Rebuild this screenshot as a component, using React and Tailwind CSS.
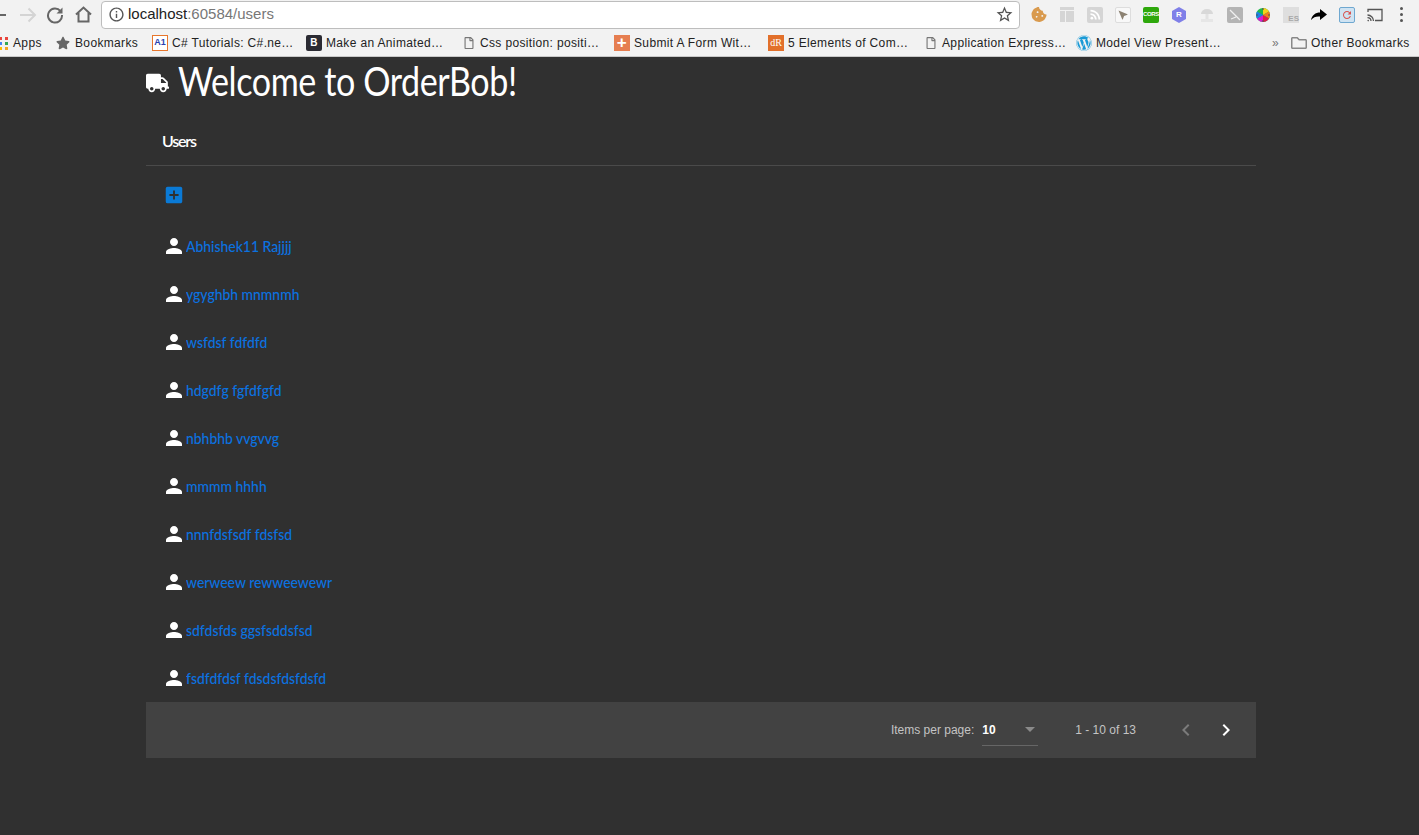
import React from 'react';
import { FaTruck, FaStar, FaWordpress, FaRegFile, FaRegFolder, FaCookieBite } from 'react-icons/fa';
import {
  MdPerson, MdAddBox, MdChevronLeft, MdChevronRight, MdRefresh, MdInfoOutline, MdStarBorder, MdRssFeed, MdNearMe,
} from 'react-icons/md';

const users = [
  'Abhishek11 Rajjjj',
  'ygyghbh mnmnmh',
  'wsfdsf fdfdfd',
  'hdgdfg fgfdfgfd',
  'nbhbhb vvgvvg',
  'mmmm hhhh',
  'nnnfdsfsdf fdsfsd',
  'werweew rewweewewr',
  'sdfdsfds ggsfsddsfsd',
  'fsdfdfdsf fdsdsfdsfdsfd',
];

const DocIcon = () => <FaRegFile className="text-[12px] text-[#777]" />;

const bookmarks = [
  { w: 'w-[154px]', gap: 'gap-[4px]', iconW: 'w-[16px]', label: 'C# Tutorials: C#.ne…', icon: <span className="flex h-4 w-4 items-center justify-center border border-[#e8762c] bg-white font-['Liberation_Sans',sans-serif] text-[9px] font-bold tracking-normal text-[#2b3fb0]">A1</span> },
  { w: 'w-[157px]', gap: 'gap-[4px]', iconW: 'w-[16px]', label: 'Make an Animated…', icon: <span className="flex h-4 w-4 items-center justify-center rounded-[2px] bg-[#2b2b33] text-[10px] font-bold text-white">B</span> },
  { w: 'w-[151px]', gap: 'gap-[5px]', iconW: 'w-[12px]', label: 'Css position: positi…', icon: <DocIcon /> },
  { w: 'w-[154px]', gap: 'gap-[4px]', iconW: 'w-[16px]', label: 'Submit A Form Wit…', icon: <span className="flex h-4 w-4 items-center justify-center bg-[#e67e50] text-[17px] font-bold leading-none text-white">+</span> },
  { w: 'w-[157px]', gap: 'gap-[4px]', iconW: 'w-[16px]', label: '5 Elements of Com…', icon: <span className="flex h-4 w-4 items-center justify-center bg-[#e2702b] font-['Liberation_Serif',serif] text-[10px] tracking-normal text-white">dR</span> },
  { w: 'w-[151px]', gap: 'gap-[5px]', iconW: 'w-[12px]', label: 'Application Express…', icon: <DocIcon /> },
  { w: 'w-[196px]', gap: 'gap-[4px]', iconW: 'w-[16px]', label: 'Model View Present…', icon: <FaWordpress className="text-[16px] text-[#1a9ad6]" /> },
];

const AppsGrid = () => (
  <svg width="8" height="16" viewBox="0 0 8 16">
    <rect x="0" y="2" width="2" height="3" fill="#e8453c" />
    <rect x="5" y="2" width="3" height="3" fill="#e8453c" />
    <rect x="0" y="7" width="2" height="3" fill="#4285f4" />
    <rect x="5" y="7" width="3" height="3" fill="#34a853" />
    <rect x="0" y="12" width="2" height="3" fill="#fbbc05" />
    <rect x="5" y="12" width="3" height="3" fill="#f5a623" />
  </svg>
);

const ForwardArrow = () => (
  <svg width="20" height="20" viewBox="0 0 20 20" fill="none" stroke="#d4d4d4" strokeWidth="2">
    <path d="M2 10h15M10.500 3.500 17 10l-6.500 6.500" />
  </svg>
);

const ReloadIcon = () => (
  <svg width="18" height="18" viewBox="0 0 18 18" fill="none">
    <path d="M14.500 5.200A7 7 0 1 0 16 9" stroke="#666" strokeWidth="2" />
    <path d="M16.500 1.500v6h-6z" fill="#666" />
  </svg>
);

const HomeIcon = () => (
  <svg width="17" height="17" viewBox="0 0 17 17" fill="none" stroke="#666" strokeWidth="2">
    <path d="M1 8.500 8.500 1.500 16 8.500M3.500 7v8.500h10V7" />
  </svg>
);

const ShareArrow = () => (
  <svg width="16" height="16" viewBox="0 0 16 16">
    <path d="M0 13C1 8 4.500 5.500 9 5.500V2l7 5.500-7 5.500V9.500C5.500 9 2.500 10 0 13z" fill="#000" />
  </svg>
);

const CastIcon = () => (
  <svg width="16" height="14" viewBox="0 0 16 14" fill="none" stroke="#555" strokeWidth="1.300">
    <path d="M1 4V1.500h14v11H8" />
    <path d="M.5 7a6 6 0 0 1 6 6M.5 9.600A3.500 3.500 0 0 1 4 13" />
    <circle cx="1.200" cy="12.600" r=".8" fill="#555" stroke="none" />
  </svg>
);

const ColorWheel = () => (
  <svg width="16" height="16" viewBox="0 0 16 16">
    <circle cx="8" cy="8" r="7" fill="#1fb84a" />
    <path d="M8 8V1a7 7 0 0 1 6 3.500z" fill="#f7d21c" />
    <path d="M8 8l6-3.500a7 7 0 0 1 0 7z" fill="#f47b20" />
    <path d="M8 8l6 3.500A7 7 0 0 1 8 15z" fill="#e6194b" />
    <path d="M8 8v7a7 7 0 0 1-6-3.500z" fill="#d61cd1" />
    <path d="M8 8l-6 3.500a7 7 0 0 1 0-7z" fill="#1c7fe6" />
    <path d="M8 1v2M8 13v2M1 8h2M13 8h2" stroke="#555" strokeWidth="1.200" />
  </svg>
);

const HexIcon = () => (
  <div className="relative flex h-4 w-4 items-center justify-center">
    <svg width="16" height="16" viewBox="0 0 16 16"><path d="M8 0l7 4v8l-7 4-7-4V4z" fill="#7f7fe8" /></svg>
    <span className="absolute font-['Liberation_Sans',sans-serif] text-[8px] font-bold text-white">R</span>
  </div>
);

const MushroomIcon = () => (
  <svg width="16" height="16" viewBox="0 0 16 16">
    <path d="M2 7a6 5 0 0 1 12 0z" fill="#d8d8d8" />
    <rect x="6.500" y="7" width="3" height="5" fill="#e2e2e2" />
    <rect x="2" y="12" width="12" height="3" fill="#e6e6e6" />
  </svg>
);

const SlashTile = () => (
  <svg width="16" height="16" viewBox="0 0 16 16">
    <rect width="16" height="16" rx="2" fill="#b4b4b4" />
    <path d="M3 3l10 10M4 12l5-2" stroke="#f0f0f0" strokeWidth="1.300" />
  </svg>
);

const Toolbar = () => (
  <div className="flex h-[29px] items-center bg-[#f2f2f2]">
    <div className="h-[2px] w-[6px] bg-[#666]" />
    <div className="ml-[12px]"><ForwardArrow /></div>
    <div className="ml-[8px]"><ReloadIcon /></div>
    <div className="ml-[11px]"><HomeIcon /></div>
    <div className="ml-[9px] flex h-[28px] w-[919px] items-center rounded-[4px] border border-[#bdbdbd] bg-white pl-[6px] pr-[5px]">
      <MdInfoOutline className="text-[17px] text-[#555]" />
      <span className="ml-[3px] font-['Liberation_Sans',sans-serif] text-[15px] text-[#222]">localhost<span className="text-[#777]">:60584/users</span></span>
      <MdStarBorder className="ml-auto text-[19px] text-[#555]" />
    </div>
    <div className="ml-[11px] flex items-center gap-[12px]">
      <FaCookieBite className="w-4 text-[15px] text-[#d99a4e]" />
      <div className="flex h-[15px] w-4 flex-col gap-[1px] px-[1px]"><div className="h-[3px] bg-[#d5d5d5]" /><div className="flex flex-1 gap-[1px]"><div className="w-[5px] bg-[#d5d5d5]" /><div className="flex-1 bg-[#d5d5d5]" /></div></div>
      <div className="flex h-4 w-4 items-center justify-center rounded-[2px] bg-[#d5d5d5]"><MdRssFeed className="text-[15px] text-white" /></div>
      <div className="flex h-4 w-4 items-center justify-center rounded-[2px] border border-[#ddd] bg-[#f8f8f8]"><MdNearMe className="-scale-x-100 text-[12px] text-[#8c8272]" /></div>
      <div className="flex h-4 w-4 items-center justify-center rounded-[2px] bg-[#2ea80c] font-['Liberation_Sans',sans-serif] text-[6px] font-bold tracking-[-0.3px] text-white">CORS</div>
      <HexIcon />
      <MushroomIcon />
      <SlashTile />
      <ColorWheel />
      <div className="flex h-4 w-4 items-end justify-end bg-[#dedede] font-['Liberation_Sans',sans-serif] text-[8px] font-bold leading-[9px] text-[#a8a8a8]">ES</div>
      <ShareArrow />
      <div className="flex h-4 w-4 items-center justify-center rounded-[2px] border border-[#6fa8d0] bg-[#cfe3f2]"><MdRefresh className="text-[12px] text-[#d9534f]" /></div>
      <CastIcon />
    </div>
    <div className="ml-[17px] flex flex-col gap-[3px]">
      <span className="h-[3px] w-[3px] rounded-full bg-[#555]" />
      <span className="h-[3px] w-[3px] rounded-full bg-[#555]" />
      <span className="h-[3px] w-[3px] rounded-full bg-[#555]" />
    </div>
  </div>
);

const BookmarksBar = () => (
  <div className="flex h-[28px] items-center border-b border-[#c8c8c8] bg-[#f2f2f2] font-['Liberation_Sans',sans-serif] text-[12px] tracking-[0.35px] text-[#222]">
    <div className="flex w-[56px] items-center gap-[5px]"><AppsGrid /><span>Apps</span></div>
    <div className="flex w-[96px] items-center gap-[5px]"><FaStar className="text-[14px] text-[#666]" /><span>Bookmarks</span></div>
    {bookmarks.map((b) => (
      <div key={b.label} className={`flex items-center ${b.gap} ${b.w}`}>
        <span className={`flex justify-center ${b.iconW}`}>{b.icon}</span>
        <span className="whitespace-nowrap">{b.label}</span>
      </div>
    ))}
    <span className="w-[19px] text-[#777]">»</span>
    <FaRegFolder className="text-[16px] text-[#888]" />
    <span className="ml-[4px] whitespace-nowrap">Other Bookmarks</span>
  </div>
);

const Paginator = () => (
  <div className="flex h-[56px] items-center justify-end bg-[#424242] font-['Liberation_Sans',sans-serif] text-[12px]">
    <span className="text-[#c4c4c4]">Items per page:</span>
    <div className="ml-[8px] mt-[1px] flex h-[30px] w-[56px] items-center justify-between border-b border-[#666] pb-[1px]">
      <span className="font-bold text-white">10</span>
      <span className="mr-[3px] h-0 w-0 border-x-[5px] border-t-[5px] border-x-transparent border-t-[#8a8a8a]" />
    </div>
    <span className="ml-[37px] text-[#c4c4c4]">1 - 10 of 13</span>
    <MdChevronLeft className="ml-[38px] text-[24px] text-[#7b7b7b]" />
    <MdChevronRight className="ml-[16px] mr-[18px] text-[24px] text-white" />
  </div>
);

const App = () => {
  return (
    <div className="flex h-[835px] flex-col overflow-hidden bg-[#303030]">
      <Toolbar />
      <BookmarksBar />
      <div className="ml-[146px] w-[1110px] font-['Lato',sans-serif]">
        <div className="flex h-[48px] items-center">
          <FaTruck className="mt-[4px] w-[23px] text-[22px] text-white" />
          <h1 className="ml-[9px] origin-left scale-x-[0.853] whitespace-nowrap text-[40px] font-normal tracking-[-0.5px] text-white">Welcome to OrderBob!</h1>
        </div>
        <div className="mt-[12px] flex h-[49px] items-center border-b border-[#4a4a4a] pl-[16px] text-[16px] font-semibold tracking-[-1.2px] text-white">Users</div>
        <div className="pl-[17px] pt-[18px]">
          <MdAddBox className="text-[22px] text-[#0a7ad6]" />
        </div>
        <ul className="mt-[16px]">
          {users.map((name) => (
            <li key={name} className="flex h-[48px] items-center pl-[16px]">
              <MdPerson className="w-[24px] text-[24px] text-white" />
              <a href="#" className="origin-left scale-x-[0.87] whitespace-nowrap text-[16px] font-medium text-[#0b72e0]">{name}</a>
            </li>
          ))}
        </ul>
        <Paginator />
      </div>
    </div>
  );
};

export default App;
